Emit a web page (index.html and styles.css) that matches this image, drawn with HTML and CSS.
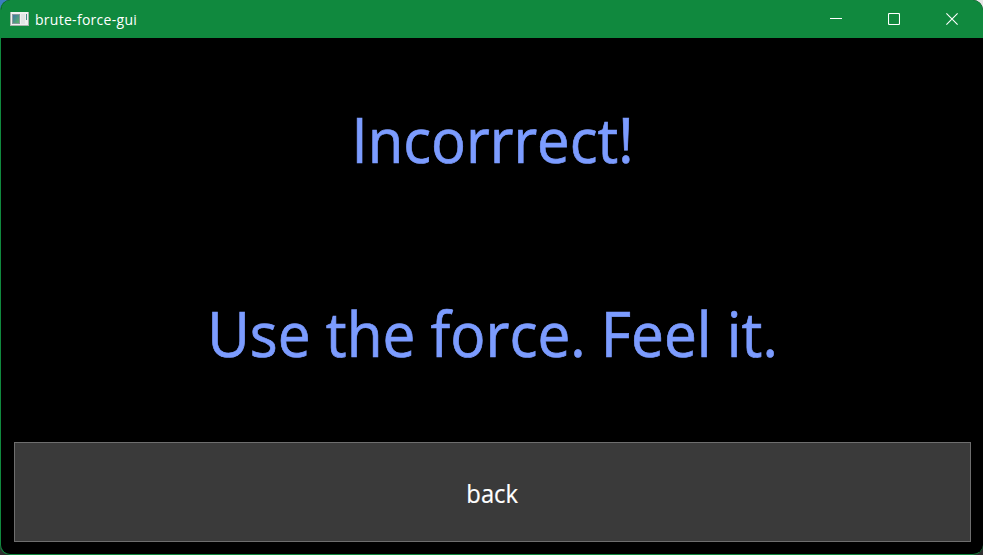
FILE: index.html
```html
<!DOCTYPE html>
<html lang="en">
<head>
<meta charset="utf-8">
<title>brute-force-gui</title>
<link rel="stylesheet" href="styles.css">
</head>
<body>
<div class="window">
  <header class="titlebar">
    <svg class="app-icon" width="19" height="16" viewBox="0 0 19 16">
      <defs><linearGradient id="pane" x1="0" y1="0" x2="1" y2="1"><stop offset="0" stop-color="#4277a8"/><stop offset="1" stop-color="#5bb568"/></linearGradient></defs>
      <path fill="#a9b2ac" d="M0 1h19v14H0z"/>
      <path fill="#f0f0f0" d="M1 1h17v13H1z"/>
      <path fill="#8a9a9c" d="M2 3h8v10H2z"/>
      <path fill="url(#pane)" d="M3 4h6v8H3z"/>
      <path fill="#e2e5e5" d="M11 3h4v10h-4z"/>
      <path fill="#488b88" d="M16 3h1v6h-1z"/>
    </svg>
    <span class="title">brute-force-gui</span>
    <div class="controls">
      <button class="control" aria-label="Minimize"><svg width="12" height="12" viewBox="0 0 12 12"><path d="M0 5.5h12"/></svg></button>
      <button class="control" aria-label="Maximize"><svg width="12" height="12" viewBox="0 0 12 12"><rect x=".5" y=".5" width="11" height="11" rx="1"/></svg></button>
      <button class="control" aria-label="Close"><svg width="12" height="12" viewBox="0 0 12 12"><path d="M.4.4l11.2 11.2M11.6.4L.4 11.6"/></svg></button>
    </div>
  </header>
  <main class="content">
    <p class="message result">Incorrrect!</p>
    <p class="message hint">Use the force. Feel it.</p>
    <button class="back"><span class="back-label">back</span></button>
  </main>
</div>
</body>
</html>
```
FILE: styles.css
```css
* { box-sizing: border-box; }
body {
  margin: 0;
  background: linear-gradient(90deg, #3b7fc0 0 50%, #e6e6e6 50%) top / 100% 50% no-repeat, #303030;
  font-family: "Open Sans", "Noto Sans", sans-serif;
}
.window {
  height: 555px;
  display: flex;
  flex-direction: column;
  overflow: hidden;
  background: #000;
  border: 1px solid #10893e;
  border-top: 0;
  border-right-width: 0;
  border-radius: 10px;
}
.titlebar {
  height: 38px;
  flex: none;
  display: flex;
  align-items: center;
  margin-left: -1px;
  padding-left: 10px;
  background: #10893e;
  color: #fff;
}
.app-icon { flex: none; }
.title { margin-left: 6px; padding-top: 2px; font-size: 14px; line-height: 20px; letter-spacing: .28px; }
.controls { display: flex; margin-left: auto; padding-right: 2px; }
.control {
  width: 58px;
  height: 38px;
  padding: 0;
  border: 0;
  background: none;
  display: flex;
  align-items: center;
  justify-content: center;
}
.control svg { fill: none; stroke: #fff; stroke-width: 1.1; }
.content {
  flex: 1;
  display: grid;
  grid-template-rows: 194px 194px 100px;
  padding: 10px 12px 0 13px;
}
.message {
  margin: 0;
  padding-bottom: 12px;
  display: flex;
  align-items: center;
  justify-content: center;
  font-size: 61.6px;
  line-height: 84px;
  color: #7c9cff;
  white-space: pre;
  -webkit-text-stroke: .7px #7c9cff;
}
.result { transform: scaleX(.942); }
.hint { transform: scaleX(.95); }
.back {
  margin-top: 6px;
  height: 100px;
  padding: 2px 0 0;
  border: 1px solid #6e6e6e;
  background: #3a3a3a;
  color: #fff;
  font: 25px/34px "Open Sans", sans-serif;
}
.back-label {
  display: inline-block;
  transform: scaleX(.95);
  -webkit-text-stroke: .2px #fff;
}
```
